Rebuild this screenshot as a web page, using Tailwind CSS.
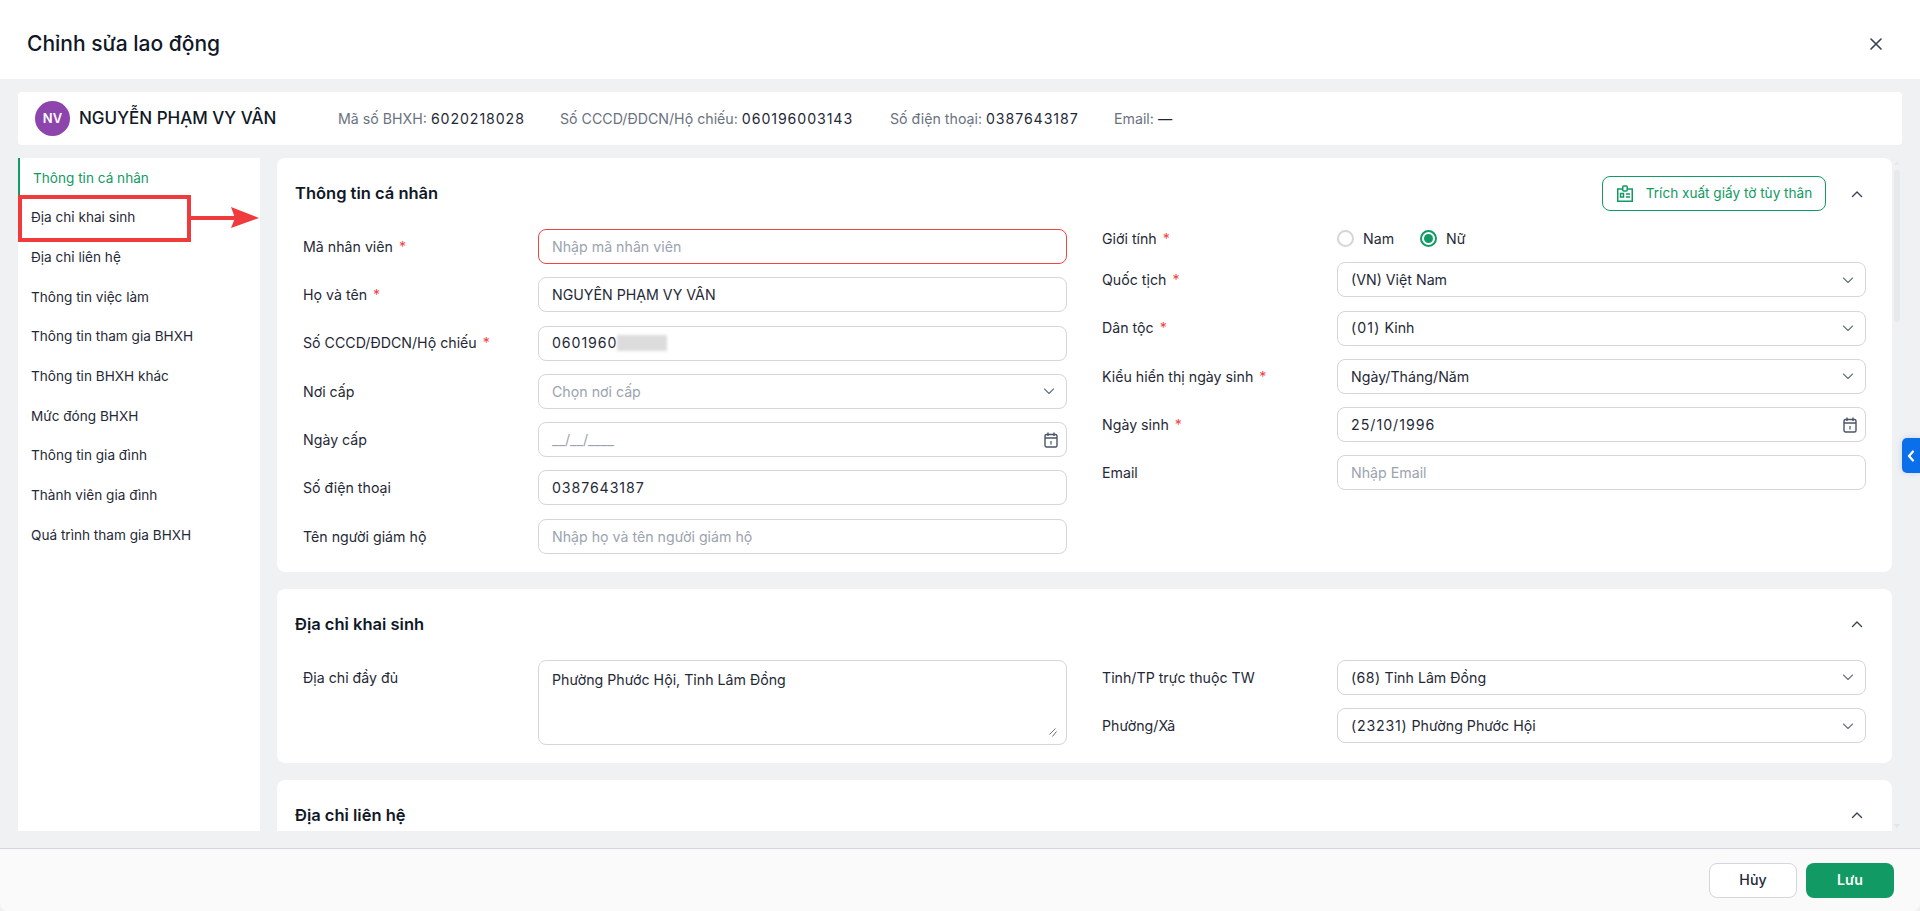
<!DOCTYPE html>
<html lang="vi">
<head>
  <meta charset="UTF-8" />
  <title>Chỉnh sửa lao động</title>
  <script src="https://cdn.jsdelivr.net/npm/@tailwindcss/browser@4"></script>
</head>
<body class="h-[911px] overflow-hidden bg-[#f0f1f3] font-['Inter',sans-serif] text-[14.2px] text-[#1f2937]">
<div class="relative flex h-[911px] flex-col">

  <!-- Header -->
  <header class="flex h-[79px] shrink-0 items-center justify-between bg-white pl-[27px] pr-[37px] pt-[9px]">
    <h1 class="text-[21px] font-medium text-[#111827]">Chỉnh sửa lao động</h1>
    <svg class="h-[14px] w-[14px] text-[#374151]" viewBox="0 0 14 14" fill="none" stroke="currentColor" stroke-width="1.6" stroke-linecap="round"><path d="M2 2l10 10M12 2L2 12"/></svg>
  </header>

  <div class="flex min-h-0 flex-1 flex-col px-[18px] pt-[13px]">
    <!-- Employee summary -->
    <div class="flex h-[53px] shrink-0 items-center rounded-[4px] bg-white pl-[17px]">
      <div class="flex h-[35px] w-[35px] items-center justify-center rounded-full bg-[#8e44ad] text-[13px] font-semibold text-white">NV</div>
      <div class="ml-[9px] w-[259px] text-[17px] font-medium text-[#111827]">NGUYỄN PHẠM VY VÂN</div>
      <div class="w-[222px] text-[#6b7280]">Mã số BHXH: <span class="tracking-[0.9px] text-[#1f2937]">6020218028</span></div>
      <div class="w-[330px] text-[#6b7280]">Số CCCD/ĐDCN/Hộ chiếu: <span class="tracking-[0.9px] text-[#1f2937]">060196003143</span></div>
      <div class="w-[224px] text-[#6b7280]">Số điện thoại: <span class="tracking-[0.9px] text-[#1f2937]">0387643187</span></div>
      <div class="text-[#6b7280]">Email: <span class="text-[#1f2937]">—</span></div>
    </div>

    <div class="mt-[13px] flex h-[673px] shrink-0">
      <!-- Side menu -->
      <nav class="flex w-[242px] shrink-0 flex-col bg-white text-[13.6px]">
        <a class="mb-[2px] flex h-[37px] items-center border-l-2 border-[#119a63] pl-[13px] pt-[3px] text-[#119a63]">Thông tin cá nhân</a>
        <a class="flex h-[40px] items-center pl-[13px]">Địa chỉ khai sinh</a>
        <a class="flex h-[40px] items-center pl-[13px]">Địa chỉ liên hệ</a>
        <a class="flex h-[40px] items-center pl-[13px]">Thông tin việc làm</a>
        <a class="flex h-[39px] items-center pl-[13px]">Thông tin tham gia BHXH</a>
        <a class="flex h-[40px] items-center pl-[13px]">Thông tin BHXH khác</a>
        <a class="flex h-[40px] items-center pl-[13px]">Mức đóng BHXH</a>
        <a class="flex h-[39px] items-center pl-[13px]">Thông tin gia đình</a>
        <a class="flex h-[40px] items-center pl-[13px]">Thành viên gia đình</a>
        <a class="flex h-[40px] items-center pl-[13px]">Quá trình tham gia BHXH</a>
      </nav>

      <!-- Sections -->
      <main class="ml-[17px] flex min-w-0 flex-1 flex-col gap-[17px] overflow-hidden">
        <section class="mr-[10px] shrink-0 rounded-[8px] bg-white pb-[18px] pl-[26px] pr-[26px]">
          <div class="-ml-[8px] flex h-[71px] items-center justify-between">
            <h2 class="text-[16.5px] font-semibold text-[#111827]">Thông tin cá nhân</h2>
            <div class="flex items-center">
              <button class="flex h-[35px] w-[224px] items-center justify-center gap-[12px] rounded-[8px] border border-[#119a63] text-[13.6px] text-[#119a63]">
                <svg class="h-[18px] w-[18px]" viewBox="0 0 18 18" fill="none" stroke="currentColor" stroke-width="1.5"><path d="M6.500 4H1.750v12.250h14.500V4H11.500"/><rect x="6.750" y="1" width="4.500" height="5" rx="1"/><rect x="4.500" y="8.500" width="3" height="3.500"/><path d="M10 9h4M10 12h4"/></svg>
                Trích xuất giấy tờ tùy thân
              </button>
              <svg class="ml-[24px] mr-[2px] h-[14px] w-[14px] text-[#374151]" viewBox="0 0 14 14" fill="none" stroke="currentColor" stroke-width="1.400" stroke-linecap="round" stroke-linejoin="round"><path d="M2.500 9.500L7 5l4.500 4.500"/></svg>
            </div>
          </div>
          <div class="grid grid-cols-2 gap-x-[35px]">
            <div class="flex flex-col gap-[13.300px]">
              <div class="flex h-[35px] items-center"><label class="w-[235px] shrink-0">Mã nhân viên <span class="ml-[2px] text-[#ef4444]">*</span></label><input class="h-[35px] w-full rounded-[8px] border border-[#ef4444] px-[13px] outline-none placeholder:text-[#9ca3af]" placeholder="Nhập mã nhân viên" /></div>
              <div class="flex h-[35px] items-center"><label class="w-[235px] shrink-0">Họ và tên <span class="ml-[2px] text-[#ef4444]">*</span></label><input class="h-[35px] w-full rounded-[8px] border border-[#d4d6da] px-[13px] outline-none" value="NGUYỄN PHẠM VY VÂN" /></div>
              <div class="flex h-[35px] items-center"><label class="w-[235px] shrink-0">Số CCCD/ĐDCN/Hộ chiếu <span class="ml-[2px] text-[#ef4444]">*</span></label><div class="flex h-[35px] w-full items-center rounded-[8px] border border-[#d4d6da] px-[13px]"><span class="tracking-[0.9px]">0601960</span><span class="h-[16px] w-[50px] bg-[#dcdcdc] blur-[1.500px]"></span></div></div>
              <div class="flex h-[35px] items-center"><label class="w-[235px] shrink-0">Nơi cấp</label><div class="flex h-[35px] w-full items-center justify-between rounded-[8px] border border-[#d4d6da] pl-[13px] pr-[10px] text-[#9ca3af]">Chọn nơi cấp<svg class="h-[14px] w-[14px] text-[#6b7280]" viewBox="0 0 14 14" fill="none" stroke="currentColor" stroke-width="1.100" stroke-linecap="round" stroke-linejoin="round"><path d="M2.500 5L7 9.500 11.500 5"/></svg></div></div>
              <div class="flex h-[35px] items-center"><label class="w-[235px] shrink-0">Ngày cấp</label><div class="flex h-[35px] w-full items-center justify-between rounded-[8px] border border-[#d4d6da] pl-[13px] pr-[8px] text-[#9ca3af]">__/__/____<svg class="h-[16px] w-[14px] text-[#4b5563]" viewBox="0 0 14 16" fill="none" stroke="currentColor" stroke-width="1.400"><rect x="1" y="2.500" width="12" height="12.500" rx="1.500"/><path d="M1 6h12M4 .5v3.500M10 .5v3.500"/><path d="M7 9v3.500" stroke-width="1.200"/></svg></div></div>
              <div class="flex h-[35px] items-center"><label class="w-[235px] shrink-0">Số điện thoại</label><input class="h-[35px] w-full rounded-[8px] border border-[#d4d6da] px-[13px] tracking-[0.9px] outline-none" value="0387643187" /></div>
              <div class="flex h-[35px] items-center"><label class="w-[235px] shrink-0">Tên người giám hộ</label><input class="h-[35px] w-full rounded-[8px] border border-[#d4d6da] px-[13px] outline-none placeholder:text-[#9ca3af]" placeholder="Nhập họ và tên người giám hộ" /></div>
            </div>
            <div class="flex flex-col gap-[13.300px]">
              <div class="mb-px flex h-[19px] items-center">
                <label class="w-[235px] shrink-0">Giới tính <span class="ml-[2px] text-[#ef4444]">*</span></label>
                <span class="h-[17px] w-[17px] rounded-full border-2 border-[#d4d6da]"></span><span class="ml-[9px]">Nam</span>
                <span class="ml-[26px] flex h-[17px] w-[17px] items-center justify-center rounded-full border-2 border-[#119a63]"><span class="h-[9px] w-[9px] rounded-full bg-[#119a63]"></span></span><span class="ml-[9px]">Nữ</span>
              </div>
              <div class="flex h-[35px] items-center"><label class="w-[235px] shrink-0">Quốc tịch <span class="ml-[2px] text-[#ef4444]">*</span></label><div class="flex h-[35px] w-full items-center justify-between rounded-[8px] border border-[#d4d6da] pl-[13px] pr-[10px]">(VN) Việt Nam<svg class="h-[14px] w-[14px] text-[#6b7280]" viewBox="0 0 14 14" fill="none" stroke="currentColor" stroke-width="1.100" stroke-linecap="round" stroke-linejoin="round"><path d="M2.500 5L7 9.500 11.500 5"/></svg></div></div>
              <div class="flex h-[35px] items-center"><label class="w-[235px] shrink-0">Dân tộc <span class="ml-[2px] text-[#ef4444]">*</span></label><div class="flex h-[35px] w-full items-center justify-between rounded-[8px] border border-[#d4d6da] pl-[13px] pr-[10px]"><span><span class="tracking-[1.1px]">(01)</span> Kinh</span><svg class="h-[14px] w-[14px] text-[#6b7280]" viewBox="0 0 14 14" fill="none" stroke="currentColor" stroke-width="1.100" stroke-linecap="round" stroke-linejoin="round"><path d="M2.500 5L7 9.500 11.500 5"/></svg></div></div>
              <div class="flex h-[35px] items-center"><label class="w-[235px] shrink-0">Kiểu hiển thị ngày sinh <span class="ml-[2px] text-[#ef4444]">*</span></label><div class="flex h-[35px] w-full items-center justify-between rounded-[8px] border border-[#d4d6da] pl-[13px] pr-[10px]">Ngày/Tháng/Năm<svg class="h-[14px] w-[14px] text-[#6b7280]" viewBox="0 0 14 14" fill="none" stroke="currentColor" stroke-width="1.100" stroke-linecap="round" stroke-linejoin="round"><path d="M2.500 5L7 9.500 11.500 5"/></svg></div></div>
              <div class="flex h-[35px] items-center"><label class="w-[235px] shrink-0">Ngày sinh <span class="ml-[2px] text-[#ef4444]">*</span></label><div class="flex h-[35px] w-full items-center justify-between rounded-[8px] border border-[#d4d6da] pl-[13px] pr-[8px]"><span class="tracking-[1px]">25/10/1996</span><svg class="h-[16px] w-[14px] text-[#4b5563]" viewBox="0 0 14 16" fill="none" stroke="currentColor" stroke-width="1.400"><rect x="1" y="2.500" width="12" height="12.500" rx="1.500"/><path d="M1 6h12M4 .5v3.500M10 .5v3.500"/><path d="M7 9v3.500" stroke-width="1.200"/></svg></div></div>
              <div class="flex h-[35px] items-center"><label class="w-[235px] shrink-0">Email</label><input class="h-[35px] w-full rounded-[8px] border border-[#d4d6da] px-[13px] outline-none placeholder:text-[#9ca3af]" placeholder="Nhập Email" /></div>
            </div>
          </div>
        </section>

        <section class="mr-[10px] shrink-0 rounded-[8px] bg-white pb-[18px] pl-[26px] pr-[26px]">
          <div class="-ml-[8px] flex h-[71px] items-center justify-between">
            <h2 class="text-[16.5px] font-semibold text-[#111827]">Địa chỉ khai sinh</h2>
            <svg class="mr-[2px] h-[14px] w-[14px] text-[#374151]" viewBox="0 0 14 14" fill="none" stroke="currentColor" stroke-width="1.400" stroke-linecap="round" stroke-linejoin="round"><path d="M2.500 9.500L7 5l4.500 4.500"/></svg>
          </div>
          <div class="grid grid-cols-2 gap-x-[35px]">
            <div class="flex">
              <label class="w-[235px] shrink-0 pt-[7px]">Địa chỉ đầy đủ</label>
              <div class="relative w-full">
                <textarea class="block h-[85px] w-full resize-none rounded-[8px] border border-[#d4d6da] px-[13px] py-[8px] outline-none">Phường Phước Hội, Tỉnh Lâm Đồng</textarea>
                <svg class="absolute bottom-[8px] right-[10px] h-[9px] w-[8px] text-[#6b7280]" viewBox="0 0 8 9" fill="none" stroke="currentColor" stroke-width="1"><path d="M.5 6.500L6.500.5M3.500 8.500L7.500 3.500"/></svg>
              </div>
            </div>
            <div class="flex flex-col gap-[13.300px]">
              <div class="flex h-[35px] items-center"><label class="w-[235px] shrink-0">Tỉnh/TP trực thuộc TW</label><div class="flex h-[35px] w-full items-center justify-between rounded-[8px] border border-[#d4d6da] pl-[13px] pr-[10px]"><span><span class="tracking-[0.4px]">(68)</span> Tỉnh Lâm Đồng</span><svg class="h-[14px] w-[14px] text-[#6b7280]" viewBox="0 0 14 14" fill="none" stroke="currentColor" stroke-width="1.100" stroke-linecap="round" stroke-linejoin="round"><path d="M2.500 5L7 9.500 11.500 5"/></svg></div></div>
              <div class="flex h-[35px] items-center"><label class="w-[235px] shrink-0">Phường/Xã</label><div class="flex h-[35px] w-full items-center justify-between rounded-[8px] border border-[#d4d6da] pl-[13px] pr-[10px]"><span><span class="tracking-[0.8px]">(23231)</span> Phường Phước Hội</span><svg class="h-[14px] w-[14px] text-[#6b7280]" viewBox="0 0 14 14" fill="none" stroke="currentColor" stroke-width="1.100" stroke-linecap="round" stroke-linejoin="round"><path d="M2.500 5L7 9.500 11.500 5"/></svg></div></div>
            </div>
          </div>
        </section>

        <section class="mr-[10px] shrink-0 rounded-[8px] bg-white pl-[26px] pr-[26px]">
          <div class="-ml-[8px] flex h-[71px] items-center justify-between">
            <h2 class="text-[16.5px] font-semibold text-[#111827]">Địa chỉ liên hệ</h2>
            <svg class="mr-[2px] h-[14px] w-[14px] text-[#374151]" viewBox="0 0 14 14" fill="none" stroke="currentColor" stroke-width="1.400" stroke-linecap="round" stroke-linejoin="round"><path d="M2.500 9.500L7 5l4.500 4.500"/></svg>
          </div>
        </section>
      </main>
    </div>
  </div>

  <!-- Footer -->
  <footer class="flex h-[63px] shrink-0 items-center justify-end gap-[9px] rounded-b-[8px] border-t border-[#d4d6da] bg-[#fafafa] pr-[26px]">
    <button class="h-[35px] w-[88px] rounded-[8px] border border-[#d4d6da] bg-white font-medium text-[#1f2937]">Hủy</button>
    <button class="h-[35px] w-[88px] rounded-[8px] bg-[#119a63] font-semibold text-white">Lưu</button>
  </footer>

  <!-- Scrollbar, collapse tab -->
  <div class="absolute left-[1894px] top-[161px] h-0 w-0 border-x-[3px] border-b-[4px] border-x-transparent border-b-[#e8e9eb]"></div>
  <div class="absolute left-[1894px] top-[170px] h-[152px] w-[6px] rounded-[3px] bg-[#e8e9eb]"></div>
  <div class="absolute left-[1894px] top-[824px] h-0 w-0 border-x-[3px] border-t-[4px] border-x-transparent border-t-[#e2e3e5]"></div>
  <div class="absolute right-0 top-[438px] flex h-[35px] w-[18px] items-center justify-center rounded-l-[5px] bg-[#0a6fe8] shadow-[0_0_6px_rgba(10,111,232,0.2)]">
    <svg class="h-[12px] w-[8px] text-white" viewBox="0 0 8 12" fill="none" stroke="currentColor" stroke-width="2.200" stroke-linecap="round" stroke-linejoin="round"><path d="M6 1.500L2 6l4 4.500"/></svg>
  </div>

  <!-- Red annotation over the menu -->
  <div class="absolute left-[18px] top-[195px] h-[47px] w-[173px] border-[4px] border-[#ef3b3b]"></div>
  <svg class="absolute left-[190px] top-[207px] h-[22px] w-[70px]" viewBox="0 0 70 22"><path d="M0 9H46V13H0z M41 0L69 11L41 21L45 11z" fill="#ef3b3b"/></svg>
</div>
</body>
</html>
